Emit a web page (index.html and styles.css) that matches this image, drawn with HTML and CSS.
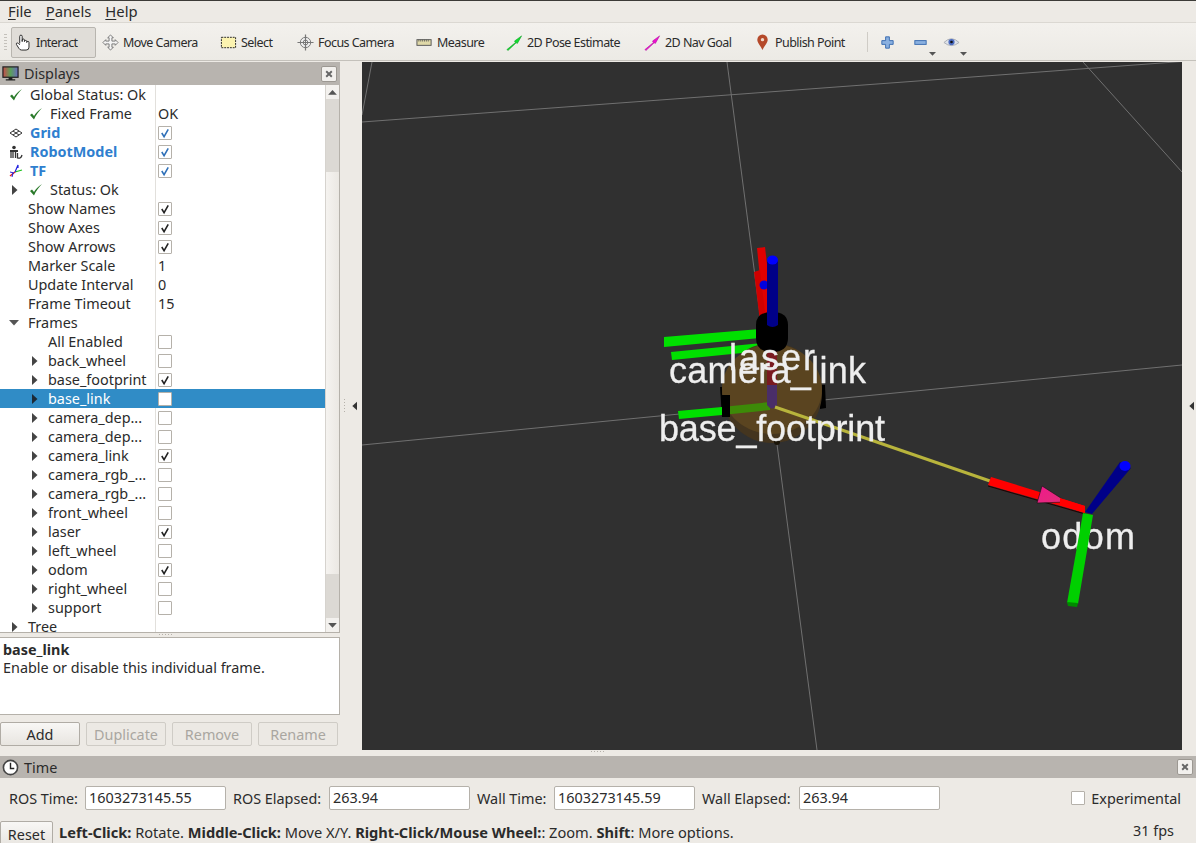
FILE: index.html
```html
<!DOCTYPE html>
<html lang="en">
<head>
<meta charset="utf-8">
<title>RViz</title>
<link rel="stylesheet" href="styles.css">
</head>
<body>
<svg class="defs" width="0" height="0" aria-hidden="true">
  <defs>
    <symbol id="ok" viewBox="0 0 14 14"><path d="M1 8 L5 12.500 C7 8 9.500 4.500 13 1 C9 3.500 6.500 6.500 5 9 L3 6.500 Z" fill="#2a7a2a"/></symbol>
    <symbol id="tick" viewBox="0 0 13 13"><path d="M3 6.500 L5.500 10.500 L10 2.500" fill="none" stroke="currentColor" stroke-width="1.700"/></symbol>
    <symbol id="right" viewBox="0 0 8 10"><path d="M1 0 L6.500 5 L1 10 Z" fill="currentColor"/></symbol>
    <symbol id="down" viewBox="0 0 10 8"><path d="M0 1 L10 1 L5 6.500 Z" fill="currentColor"/></symbol>
    <symbol id="x" viewBox="0 0 10 10"><path d="M1.500 1.500 L8.500 8.500 M8.500 1.500 L1.500 8.500" stroke="#666" stroke-width="2.400"/></symbol>
  </defs>
</svg>
<div class="app">
  <nav class="menubar">
    <span class="menu"><u>F</u>ile</span>
    <span class="menu"><u>P</u>anels</span>
    <span class="menu"><u>H</u>elp</span>
  </nav>
  <div class="toolbar">
    <span class="grip"></span>
    <div class="tool active">
      <svg class="ticon" viewBox="0 0 18 18"><path d="M5 10 V2.500 a1.300 1.300 0 0 1 2.600 0 V8 V6.500 a1.200 1.200 0 0 1 2.400 0 V8 a1.200 1.200 0 0 1 2.400 0 V9 a1.200 1.200 0 0 1 2.400 0 V14 q0 3 -3 3 H7 q-2 0 -3 -2 L1.500 11 q-.5 -1.500 1 -1.500 q1 0 2.500 2" fill="#fff" stroke="#222" stroke-width="1"/></svg>
      <span>Interact</span>
    </div>
    <div class="tool">
      <svg class="ticon" viewBox="0 0 18 18"><path d="M9 1 L12 4 H10.500 V7.500 H14 V6 L17 9 L14 12 V10.500 H10.500 V14 H12 L9 17 L6 14 H7.500 V10.500 H4 V12 L1 9 L4 6 V7.500 H7.500 V4 H6 Z" fill="#f4f4f4" stroke="#777" stroke-width="1"/></svg>
      <span>Move Camera</span>
    </div>
    <div class="tool">
      <svg class="ticon" viewBox="0 0 18 18"><rect x="1.500" y="3.500" width="15" height="11" fill="#fbf3b0" stroke="#222" stroke-width="1" stroke-dasharray="2 1"/></svg>
      <span>Select</span>
    </div>
    <div class="tool">
      <svg class="ticon" viewBox="0 0 18 18"><circle cx="9" cy="9" r="5.500" fill="#eee" stroke="#777"/><circle cx="9" cy="9" r="2.500" fill="#fff" stroke="#777"/><path d="M9 0.500 V17.500 M0.500 9 H17.500" stroke="#777" stroke-width="1.300"/></svg>
      <span>Focus Camera</span>
    </div>
    <div class="tool">
      <svg class="ticon" viewBox="0 0 18 18"><rect x="1" y="6" width="15" height="6" fill="#e0d9a8" stroke="#555"/><path d="M3 6 V8 M5 6 V8 M7 6 V8 M9 6 V8 M11 6 V8 M13 6 V8" stroke="#555" stroke-width=".8"/></svg>
      <span>Measure</span>
    </div>
    <div class="tool">
      <svg class="ticon" viewBox="0 0 18 18"><path d="M1 16.500 L10 9 L9 7.500 L16.500 2 L12 10 L10.800 9.300 L2 17.500 Z" fill="#10e030" stroke="#0a9a20" stroke-width=".6"/></svg>
      <span>2D Pose Estimate</span>
    </div>
    <div class="tool">
      <svg class="ticon" viewBox="0 0 18 18"><path d="M1 16.500 L10 9 L9 7.500 L16.500 2 L12 10 L10.800 9.300 L2 17.500 Z" fill="#f010d0" stroke="#b010a0" stroke-width=".6"/></svg>
      <span>2D Nav Goal</span>
    </div>
    <div class="tool">
      <svg class="ticon" viewBox="0 0 18 18"><path d="M9 17 C7 12 3.500 9.500 3.500 6 A5.500 5.500 0 0 1 14.500 6 C14.500 9.500 11 12 9 17 Z" fill="#b5492a"/><circle cx="9" cy="6" r="1.800" fill="#f0d8c8"/></svg>
      <span>Publish Point</span>
    </div>
    <span class="sep"></span>
    <div class="tool">
      <svg class="ticon" viewBox="0 0 18 18"><path d="M7 3 H11 V7 H15 V11 H11 V15 H7 V11 H3 V7 H7 Z" fill="#8ab0e0" stroke="#3a6cb0" stroke-width="1"/></svg>
    </div>
    <div class="tool">
      <svg class="ticon" viewBox="0 0 18 18"><rect x="3" y="7" width="12" height="4" fill="#8ab0e0" stroke="#3a6cb0"/></svg>
      <svg class="caret" viewBox="0 0 10 8"><use href="#down"/></svg>
    </div>
    <div class="tool">
      <svg class="ticon" viewBox="0 0 18 18"><path d="M1 9 Q9 1 17 9 Q9 15.500 1 9 Z" fill="#dfe3ea" stroke="#a8acb4"/><circle cx="9" cy="8.500" r="3.300" fill="#4c6cc0"/><circle cx="9" cy="8.500" r="1.400" fill="#111"/></svg>
      <svg class="caret" viewBox="0 0 10 8"><use href="#down"/></svg>
    </div>
  </div>

  <div class="main">
    <aside class="left">
      <header class="dock-title">
        <svg class="dock-icon" viewBox="0 0 18 18">
          <defs><linearGradient id="scr" x1="0" x2="1" y1="0" y2="0"><stop offset="0" stop-color="#c94a4a"/><stop offset=".5" stop-color="#5aa05a"/><stop offset="1" stop-color="#6a6ac0"/></linearGradient></defs>
          <rect x="1" y="2" width="16" height="11" fill="url(#scr)" stroke="#222" stroke-width="1.300"/>
          <path d="M7 13 H11 V15 H14 V16.500 H4 V15 H7 Z" fill="#222"/>
        </svg>
        <span class="dock-name">Displays</span>
        <button class="closebtn"><svg viewBox="0 0 10 10"><use href="#x"/></svg></button>
      </header>
      <div class="tree-wrap">
        <div class="tree">
          <div class="row"><div class="name p9"><svg class="ok"><use href="#ok"/></svg><span>Global Status: Ok</span></div><div class="val"></div></div>
          <div class="row"><div class="name p29"><svg class="ok"><use href="#ok"/></svg><span>Fixed Frame</span></div><div class="val">OK</div></div>
          <div class="row"><div class="name p9 blue"><svg class="ok" viewBox="0 0 14 14"><path d="M7 3 L13 7 L7 11 L1 7 Z M4 5 L10 9 M10 5 L4 9" fill="none" stroke="#333" stroke-width="1"/></svg><span>Grid</span></div><div class="val"><span class="cb bl"><svg><use href="#tick"/></svg></span></div></div>
          <div class="row"><div class="name p9 blue"><svg class="ok" viewBox="0 0 14 14"><circle cx="5" cy="2.500" r="1.800" fill="#333"/><rect x="1" y="5" width="8" height="2" fill="#333"/><path d="M2 7 V13 M4 7 V13 M6.500 7 V13 M8.500 8 V13 Q12 14 13 10" fill="none" stroke="#333" stroke-width="1.300"/></svg><span>RobotModel</span></div><div class="val"><span class="cb bl"><svg><use href="#tick"/></svg></span></div></div>
          <div class="row"><div class="name p9 blue"><svg class="ok" viewBox="0 0 14 14"><path d="M6 8 L13 6" stroke="#1cc01c" stroke-width="1.200"/><path d="M6 8 L9 1 L9 4" stroke="#2020e0" stroke-width="1.200" fill="none"/><path d="M6 8 L1 12" stroke="#e02020" stroke-width="1.400"/><path d="M1 8 L5 9 M4 9 L3 13" stroke="#2020e0" stroke-width="1"/></svg><span>TF</span></div><div class="val"><span class="cb bl"><svg><use href="#tick"/></svg></span></div></div>
          <div class="row"><div class="name p11"><svg class="ar"><use href="#right"/></svg><svg class="ok m7"><use href="#ok"/></svg><span>Status: Ok</span></div><div class="val"></div></div>
          <div class="row"><div class="name t28">Show Names</div><div class="val"><span class="cb"><svg><use href="#tick"/></svg></span></div></div>
          <div class="row"><div class="name t28">Show Axes</div><div class="val"><span class="cb"><svg><use href="#tick"/></svg></span></div></div>
          <div class="row"><div class="name t28">Show Arrows</div><div class="val"><span class="cb"><svg><use href="#tick"/></svg></span></div></div>
          <div class="row"><div class="name t28">Marker Scale</div><div class="val">1</div></div>
          <div class="row"><div class="name t28">Update Interval</div><div class="val">0</div></div>
          <div class="row"><div class="name t28">Frame Timeout</div><div class="val">15</div></div>
          <div class="row"><div class="name p9"><svg class="ar-d" viewBox="0 0 10 8"><use href="#down"/></svg><span>Frames</span></div><div class="val"></div></div>
          <div class="row"><div class="name t48">All Enabled</div><div class="val"><span class="cb"></span></div></div>
          <div class="row"><div class="name p31"><svg class="ar"><use href="#right"/></svg><span>back_wheel</span></div><div class="val"><span class="cb"></span></div></div>
          <div class="row"><div class="name p31"><svg class="ar"><use href="#right"/></svg><span>base_footprint</span></div><div class="val"><span class="cb"><svg><use href="#tick"/></svg></span></div></div>
          <div class="row selected"><div class="name p31"><svg class="ar"><use href="#right"/></svg><span>base_link</span></div><div class="val"><span class="cb"></span></div></div>
          <div class="row"><div class="name p31"><svg class="ar"><use href="#right"/></svg><span>camera_dep...</span></div><div class="val"><span class="cb"></span></div></div>
          <div class="row"><div class="name p31"><svg class="ar"><use href="#right"/></svg><span>camera_dep...</span></div><div class="val"><span class="cb"></span></div></div>
          <div class="row"><div class="name p31"><svg class="ar"><use href="#right"/></svg><span>camera_link</span></div><div class="val"><span class="cb"><svg><use href="#tick"/></svg></span></div></div>
          <div class="row"><div class="name p31"><svg class="ar"><use href="#right"/></svg><span>camera_rgb_...</span></div><div class="val"><span class="cb"></span></div></div>
          <div class="row"><div class="name p31"><svg class="ar"><use href="#right"/></svg><span>camera_rgb_...</span></div><div class="val"><span class="cb"></span></div></div>
          <div class="row"><div class="name p31"><svg class="ar"><use href="#right"/></svg><span>front_wheel</span></div><div class="val"><span class="cb"></span></div></div>
          <div class="row"><div class="name p31"><svg class="ar"><use href="#right"/></svg><span>laser</span></div><div class="val"><span class="cb"><svg><use href="#tick"/></svg></span></div></div>
          <div class="row"><div class="name p31"><svg class="ar"><use href="#right"/></svg><span>left_wheel</span></div><div class="val"><span class="cb"></span></div></div>
          <div class="row"><div class="name p31"><svg class="ar"><use href="#right"/></svg><span>odom</span></div><div class="val"><span class="cb"><svg><use href="#tick"/></svg></span></div></div>
          <div class="row"><div class="name p31"><svg class="ar"><use href="#right"/></svg><span>right_wheel</span></div><div class="val"><span class="cb"></span></div></div>
          <div class="row"><div class="name p31"><svg class="ar"><use href="#right"/></svg><span>support</span></div><div class="val"><span class="cb"></span></div></div>
          <div class="row"><div class="name p11"><svg class="ar"><use href="#right"/></svg><span>Tree</span></div><div class="val"></div></div>
        </div>
        <div class="scrollbar">
          <span class="sb-btn"><svg viewBox="0 0 10 8"><path d="M0 6.500 L10 6.500 L5 1 Z" fill="#555"/></svg></span>
          <span class="sb-track t1"></span>
          <span class="sb-thumb"></span>
          <span class="sb-track t2"></span>
          <span class="sb-btn"><svg viewBox="0 0 10 8"><use href="#down"/></svg></span>
        </div>
      </div>
      <div class="h-split"><span class="dots"></span></div>
      <div class="help">
        <b>base_link</b>
        <span>Enable or disable this individual frame.</span>
      </div>
      <div class="btnrow">
        <button class="btn">Add</button>
        <button class="btn off">Duplicate</button>
        <button class="btn off">Remove</button>
        <button class="btn off">Rename</button>
      </div>
    </aside>
    <div class="v-split"><span class="vdots"></span><svg class="ar dark"><use href="#right" transform="matrix(-1 0 0 1 8 0)"/></svg></div>
    <div class="view">
      <svg class="scene" viewBox="362 62 820 688" width="820" height="688">
        <defs>
          <linearGradient id="cone" x1="0" y1="0" x2="1" y2="1"><stop offset="0" stop-color="#f0188c"/><stop offset="1" stop-color="#e03078"/></linearGradient>
        </defs>
        <g stroke="#707070" stroke-width="1" fill="none">
          <path d="M362 122 L1182 61.500"/>
          <path d="M362 445 L1182 365"/>
          <path d="M727 62 L817 750"/>
          <path d="M1083 62 L1182 172"/>
          <path d="M372 62 L362 115"/>
        </g>
        <!-- red axes behind -->
        <path d="M757 248 L765 247 L773 315 L764 318 Z" fill="#e00000"/>
        <path d="M754 272 L760 270 L766 320 L760 322 Z" fill="#d00000"/>
        <circle cx="764" cy="285" r="4.500" fill="#0000e0"/>
        <!-- green axes -->
        <path d="M664 337 L760 329 L760 338 L664 347 Z" fill="#00e000"/>
        <path d="M671 352 L762 343 L762 351 L672 360 Z" fill="#00e000"/>
        <!-- base disc -->
        <path d="M720 387 L728 387 L730 417 L722 417 Z" fill="#000"/>
        <path d="M820 385 L825 385 L826 408 L820 409 Z" fill="#000"/>
        <ellipse cx="772" cy="393" rx="50" ry="50" fill="#44351f"/>
        <ellipse cx="772" cy="389" rx="50" ry="45" fill="#5a4420"/>
        <path d="M678 411 L722 407 L722 415 L679 419 Z" fill="#00e000"/>
        <path d="M722 407 L770 402 L770 410 L722 415 Z" fill="#3d8a08"/>
        <path d="M722 395 L730 395 L730 417 L722 417 Z" fill="#000"/>
        <!-- vertical thing -->
        <path d="M767 350 H777 V385 H767 Z" fill="#7a1a20"/>
        <path d="M767 385 H777 V405 Q772 412 767 405 Z" fill="#4a2e68"/>
        <!-- laser -->
        <path d="M756 325 Q756 312 772 312 Q788 312 788 325 V338 Q788 352 772 352 Q756 352 756 338 Z" fill="#000"/>
        <path d="M767 260 H778 V325 Q772.500 329 767 325 Z" fill="#000088"/>
        <ellipse cx="772.500" cy="260" rx="5.500" ry="4.500" fill="#0000ff"/>
        <!-- small dot -->
        <circle cx="777" cy="442" r="3" fill="#1a1408"/>
        <!-- yellow arrow shaft -->
        <path d="M775 407 L990 481" stroke="#b8b43c" stroke-width="3" fill="none"/>
        <!-- labels -->
        <g class="label">
          <text x="729" y="370" textLength="86">laser</text>
          <text x="669" y="383" textLength="197">camera_link</text>
          <text x="659" y="441" textLength="226">base_footprint</text>
          <text x="1041" y="549" textLength="94">odom</text>
        </g>
        <!-- odom frame -->
        <path d="M991 477 L1085 506 L1085 513 L988 485 Z" fill="#ff0000"/>
        <path d="M988 486 L1085 514" stroke="#200000" stroke-width="1" fill="none"/>
        <path d="M1042 486 L1037 503 L1067 502 Z" fill="url(#cone)" stroke="#111" stroke-width=".6"/>
        <path d="M1060 498 L1085 506 L1085 513 L1060 505 Z" fill="#ff0000"/>
        <path d="M1085 512 L1120 462 L1131 468 L1092 514 Z" fill="#000088"/>
        <ellipse cx="1125" cy="466" rx="5.500" ry="5" fill="#0000ff"/>
        <path d="M1083 513 L1093 515 L1078 604 L1067 603 Z" fill="#00d000"/>
        <path d="M1067 602 L1078 603 L1077 607 L1068 606 Z" fill="#008a00"/>
      </svg>
    </div>
    <div class="r-split"><svg class="ar dark"><use href="#right" transform="matrix(-1 0 0 1 8 0)"/></svg></div>
  </div>

  <div class="b-split"><span class="dots"></span></div>

  <section class="time">
    <header class="dock-title time-title">
      <svg class="dock-icon" viewBox="0 0 18 18"><circle cx="9" cy="9" r="7.500" fill="#fff" stroke="#444" stroke-width="1.700"/><path d="M9 4 V10 H13" fill="none" stroke="#222" stroke-width="1.500"/></svg>
      <span class="dock-name">Time</span>
      <button class="closebtn"><svg viewBox="0 0 10 10"><use href="#x"/></svg></button>
    </header>
    <div class="time-row">
      <span class="lb l1">ROS Time:</span><span class="field f1">1603273145.55</span>
      <span class="lb l2">ROS Elapsed:</span><span class="field f2">263.94</span>
      <span class="lb l3">Wall Time:</span><span class="field f3">1603273145.59</span>
      <span class="lb l4">Wall Elapsed:</span><span class="field f4">263.94</span>
      <span class="spacer"></span>
      <span class="cb"></span><span class="lb exp">Experimental</span>
    </div>
  </section>
  <footer class="status">
    <button class="reset">Reset</button>
    <span class="hint"><b>Left-Click:</b> Rotate. <b>Middle-Click:</b> Move X/Y. <b>Right-Click/Mouse Wheel:</b>: Zoom. <b>Shift</b>: More options.</span>
    <span class="fps">31 fps</span>
  </footer>
</div>
</body>
</html>
```

FILE: styles.css
```css
* { box-sizing: border-box; }
html, body { margin: 0; padding: 0; }
body {
  width: 1196px;
  height: 843px;
  overflow: hidden;
  background: #edeae5;
  color: #2b2b2b;
  font-family: "Noto Sans", "Open Sans", sans-serif;
  font-size: 14.400px;
}
.defs { position: absolute; }
.app { display: flex; flex-direction: column; width: 1196px; height: 843px; overflow: hidden; }

.menubar {
  height: 23px;
  flex: none;
  display: flex;
  align-items: center;
  gap: 14px;
  padding: 0 0 2px 8px;
  border-top: 1px solid #3c3b37;
  border-bottom: 1px solid #dbd8d2;
  background: #edeae5;
  font-size: 14.800px;
}
.menu u { text-underline-offset: 2px; }

.toolbar {
  height: 38px;
  flex: none;
  display: grid;
  grid-template-columns: 85px 118px 77px 119px 90px 138px 110px 114px 11px 33px 31px 36px;
  padding: 1px 0 0 11px;
  position: relative;
  align-items: center;
  background: linear-gradient(#f3f1ed, #eceae5);
  border-bottom: 1px solid #c4c1bb;
  font-size: 12.500px;
  letter-spacing: -0.550px;
}
.grip {
  position: absolute;
  left: 4px;
  top: 11px;
  width: 3px;
  height: 18px;
  background: repeating-linear-gradient(#c4c1bb 0 1px, transparent 1px 3px);
}
.tool {
  display: flex;
  align-items: center;
  gap: 4px;
  height: 31px;
  padding-left: 6px;
  position: relative;
  white-space: nowrap;
}
.tool.active {
  padding-left: 3px;
  background: #e0ddd8;
  border: 1px solid #b8b5af;
  border-radius: 2px;
}
.ticon { width: 17px; height: 17px; flex: none; }
.caret { width: 7px; height: 6px; position: absolute; color: #555; left: 23px; bottom: 1px; }
.sep { width: 1px; height: 20px; background: #cfccc6; justify-self: center; }

.main { display: flex; height: 688px; flex: none; margin-top: 1px; }
.left { width: 340px; flex: none; display: flex; flex-direction: column; }
.dock-title {
  height: 23px;
  flex: none;
  display: flex;
  align-items: center;
  gap: 5px;
  padding: 0 3px 0 2px;
  background: #b8b4af;
}
.dock-icon { width: 17px; height: 17px; flex: none; }
.dock-name { flex: 1; }
.closebtn {
  width: 16px;
  height: 16px;
  padding: 3px;
  display: flex;
  background: #f2f0ed;
  border: 1px solid #9c9892;
  border-radius: 2px;
}
.closebtn svg { width: 8px; height: 8px; }

.tree-wrap {
  height: 548px;
  flex: none;
  display: flex;
  background: #fff;
  border-right: 1px solid #b5b1aa;
  border-bottom: 1px solid #b5b1aa;
  overflow: hidden;
}
.tree { width: 325px; flex: none; }
.row { height: 19px; display: flex; white-space: nowrap; }
.name {
  width: 156px;
  flex: none;
  display: flex;
  align-items: center;
  height: 19px;
  border-right: 1px solid #e2e0dc;
  overflow: hidden;
}
.val {
  padding-left: 2px;
  display: flex;
  align-items: center;
}
.p9 { padding-left: 9px; }
.p11 { padding-left: 11px; }
.p29 { padding-left: 29px; }
.p31 { padding-left: 31px; }
.t28 { padding-left: 28px; }
.t48 { padding-left: 48px; }
.ok { width: 14px; height: 14px; flex: none; margin-right: 7px; }
.m7 { margin-left: 1px; }
.ar { width: 8px; height: 10px; flex: none; margin-right: 9px; color: #444; }
.ar-d { width: 10px; height: 8px; flex: none; margin-right: 9px; color: #555; }
.blue { color: #2f7fcf; font-weight: 700; }
.row.selected { background: #308cc6; color: #fff; }
.row.selected .name { border-right-color: #308cc6; }
.row.selected .ar { color: #1c2a36; }
.cb {
  display: inline-flex;
  width: 14px;
  height: 14px;
  flex: none;
  background: #fff;
  border: 1px solid #b5b1aa;
  border-radius: 1px;
  color: #222;
}
.cb svg { width: 12px; height: 12px; }
.cb.bl { color: #2f70b8; }

.scrollbar {
  width: 14px;
  flex: none;
  display: flex;
  flex-direction: column;
  border-left: 1px solid #d6d3ce;
  background: #f3f1ee;
}
.sb-btn {
  height: 14px;
  flex: none;
  display: flex;
  align-items: center;
  justify-content: center;
  background: #f3f1ee;
}
.sb-btn svg { width: 9px; height: 7px; color: #555; }
.sb-track { background: #dcd9d4; flex: none; }
.t1 { height: 73px; }
.t2 { height: 44px; }
.sb-thumb {
  flex: 1;
  background: linear-gradient(90deg, #f5f3f0, #ebe8e3);
}

.h-split { height: 4px; flex: none; display: flex; justify-content: center; padding-right: 8px; }
.dots {
  width: 14px;
  height: 1px;
  margin-top: 1px;
  background: repeating-linear-gradient(90deg, #b5b1aa 0 1px, transparent 1px 3px);
}
.help {
  height: 78px;
  flex: none;
  display: flex;
  flex-direction: column;
  padding: 3px 3px;
  background: #fff;
  border: 1px solid #b5b1aa;
  border-left: 0;
  line-height: 18px;
}
.btnrow { display: flex; gap: 6px; margin-top: 7px; }
.btn {
  width: 80px;
  height: 24px;
  padding: 0;
  font: inherit;
  color: #2b2b2b;
  background: linear-gradient(#f8f7f5, #e8e5e0);
  border: 1px solid #b0aca5;
  border-radius: 2px;
}
.btn.off { color: #a9a6a0; border-color: #cfccc6; background: #ece9e4; }

.v-split { width: 22px; flex: none; display: flex; align-items: center; padding-left: 4px; gap: 5px; }
.vdots {
  width: 1px;
  height: 14px;
  background: repeating-linear-gradient(#b5b1aa 0 1px, transparent 1px 3px);
}
.ar.dark { color: #333; margin: 0; width: 7px; }
.view { width: 820px; flex: none; background: #303030; overflow: hidden; }
.scene { display: block; }
.label text {
  font-family: "Liberation Sans", Arial, sans-serif;
  font-size: 36px;
  fill: #eeeeee;
  stroke: #eeeeee;
  stroke-width: .3px;
  filter: blur(.5px);
}
.r-split { flex: 1; display: flex; align-items: center; padding-left: 5px; }

.b-split { height: 6px; flex: none; display: flex; justify-content: center; }

.time { flex: none; height: 65px; }
.time-title { height: 22px; }
.time-row { display: flex; align-items: center; height: 24px; margin-top: 8px; padding-left: 9px; }
.lb { white-space: nowrap; flex: none; }
.l1 { width: 76px; }
.l2 { width: 96px; }
.l3 { width: 77px; }
.l4 { width: 97px; }
.exp { margin: 0 0 0 6px; padding-right: 15px; }
.field {
  width: 141px;
  height: 24px;
  flex: none;
  margin-right: 7px;
  padding: 1px 3px;
  background: #fff;
  border: 1px solid #b5b1aa;
  border-radius: 2px;
}
.spacer { flex: 1; }
.status {
  flex: 1;
  display: flex;
  align-items: flex-start;
  white-space: nowrap;
}
.reset {
  width: 53px;
  height: 26px;
  padding: 0;
  font: inherit;
  color: #2b2b2b;
  background: linear-gradient(#f8f7f5, #e8e5e0);
  border: 1px solid #b0aca5;
  border-radius: 2px;
}
.hint { margin-left: 6px; padding-top: 1px; flex: 1; font-size: 14.620px; }
.fps { padding: 0 22px 0 0; }
```
